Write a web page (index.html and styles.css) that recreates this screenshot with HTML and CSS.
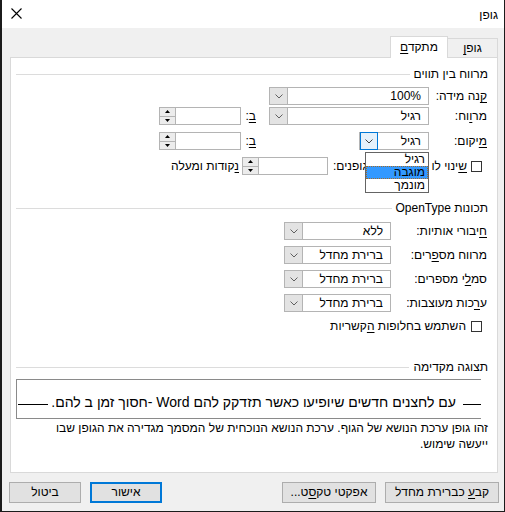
FILE: index.html
```html
<!DOCTYPE html>
<html lang="he" dir="rtl">
<head>
<meta charset="utf-8">
<title>גופן</title>
<link rel="stylesheet" href="styles.css">
</head>
<body>
<div class="window">
  <div class="titlebar">
    <span class="title">גופן</span>
    <svg class="close" width="11" height="11" viewBox="0 0 11 11"><path d="M0.5 0.5 L10.5 10.5 M10.5 0.5 L0.5 10.5" stroke="#000" stroke-width="1.1" fill="none"/></svg>
  </div>
  <div class="content">
    <div class="tabs">
      <div class="tab">גופ<u>ן</u></div>
      <div class="tab active">מתקד<u>ם</u></div>
    </div>
    <div class="panel">
      <div class="group-title t1"><span>מרווח בין תווים</span><i class="rule"></i></div>

      <div class="row r1">
        <span class="lbl w59"><u>ק</u>נה מידה:</span>
        <div class="slot160">
          <div class="combo w160"><span class="val">100%</span><span class="dd"><svg width="8" height="5" viewBox="0 0 8 5"><path d="M0.5 0.5 L4 4 L7.5 0.5" stroke="#606060" fill="none"/></svg></span></div>
        </div>
      </div>

      <div class="row r2">
        <span class="lbl w59">מר<u>ו</u>וח:</span>
        <div class="slot160">
          <div class="combo w160"><span class="val">רגיל</span><span class="dd"><svg width="8" height="5" viewBox="0 0 8 5"><path d="M0.5 0.5 L4 4 L7.5 0.5" stroke="#606060" fill="none"/></svg></span></div>
        </div>
        <span class="blbl"><u>ב</u>:</span>
        <div class="spin w82"><span class="sval"></span><span class="sbtns"><span class="sb"><svg width="5" height="3" viewBox="0 0 5 3"><path d="M0 3 L2.5 0 L5 3 Z" fill="#000"/></svg></span><span class="sb"><svg width="5" height="3" viewBox="0 0 5 3"><path d="M0 0 L2.5 3 L5 0 Z" fill="#000"/></svg></span></span></div>
      </div>

      <div class="row r3">
        <span class="lbl w59"><u>מ</u>יקום:</span>
        <div class="slot160">
          <div class="combo w70 focus"><span class="val">רגיל</span><span class="dd"><svg width="8" height="5" viewBox="0 0 8 5"><path d="M0.5 0.5 L4 4 L7.5 0.5" stroke="#404040" fill="none"/></svg></span></div>
          <div class="droplist">
            <div class="opt">רגיל</div>
            <div class="opt sel">מוגבה</div>
            <div class="opt">מונמך</div>
          </div>
        </div>
        <span class="blbl"><u>ב</u>:</span>
        <div class="spin w82"><span class="sval"></span><span class="sbtns"><span class="sb"><svg width="5" height="3" viewBox="0 0 5 3"><path d="M0 3 L2.5 0 L5 3 Z" fill="#000"/></svg></span><span class="sb"><svg width="5" height="3" viewBox="0 0 5 3"><path d="M0 0 L2.5 3 L5 0 Z" fill="#000"/></svg></span></span></div>
      </div>

      <div class="row r4">
        <span class="cb"></span>
        <span class="kern"><span><u>ש</u>ינוי לו</span><span>גופנים:</span></span>
        <div class="spin w86"><span class="sval"></span><span class="sbtns"><span class="sb"><svg width="5" height="3" viewBox="0 0 5 3"><path d="M0 3 L2.5 0 L5 3 Z" fill="#000"/></svg></span><span class="sb"><svg width="5" height="3" viewBox="0 0 5 3"><path d="M0 0 L2.5 3 L5 0 Z" fill="#000"/></svg></span></span></div>
        <span class="after"><u>נ</u>קודות ומעלה</span>
      </div>

      <div class="group-title t2"><span>תכונות OpenType</span><i class="rule"></i></div>

      <div class="row ot first">
        <span class="lbl w97"><u>ח</u>יבורי אותיות:</span>
        <div class="combo w107"><span class="val">ללא</span><span class="dd"><svg width="8" height="5" viewBox="0 0 8 5"><path d="M0.5 0.5 L4 4 L7.5 0.5" stroke="#606060" fill="none"/></svg></span></div>
      </div>
      <div class="row ot">
        <span class="lbl w97">מרווח מס<u>פ</u>רים:</span>
        <div class="combo w107"><span class="val">ברירת מחדל</span><span class="dd"><svg width="8" height="5" viewBox="0 0 8 5"><path d="M0.5 0.5 L4 4 L7.5 0.5" stroke="#606060" fill="none"/></svg></span></div>
      </div>
      <div class="row ot">
        <span class="lbl w97">סמ<u>ל</u>י מספרים:</span>
        <div class="combo w107"><span class="val">ברירת מחדל</span><span class="dd"><svg width="8" height="5" viewBox="0 0 8 5"><path d="M0.5 0.5 L4 4 L7.5 0.5" stroke="#606060" fill="none"/></svg></span></div>
      </div>
      <div class="row ot">
        <span class="lbl w97">ע<u>ר</u>כות מעוצבות:</span>
        <div class="combo w107"><span class="val">ברירת מחדל</span><span class="dd"><svg width="8" height="5" viewBox="0 0 8 5"><path d="M0.5 0.5 L4 4 L7.5 0.5" stroke="#606060" fill="none"/></svg></span></div>
      </div>
      <div class="row cbrow">
        <span class="cb"></span>
        <span class="cbtext">השתמש בחלופות <u>ה</u>קשריות</span>
      </div>

      <div class="group-title t3"><span>תצוגה מקדימה</span><i class="rule"></i></div>
      <div class="preview">
        <i class="pline short"></i>
        <span class="ptext">עם לחצנים חדשים שיופיעו כאשר תזדקק להם Word -חסוך זמן ב להם.</span>
        <i class="pline long"></i>
      </div>
      <p class="desc">זהו גופן ערכת הנושא של הגוף. ערכת הנושא הנוכחית של המסמך מגדירה את הגופן שבו<br>ייעשה שימוש.</p>
    </div>

    <div class="buttons">
      <div class="bgroup">
        <button class="btn w114">קב<u>ע</u> כברירת מחדל</button>
        <button class="btn w94">אפקטי טק<u>ס</u>ט...</button>
      </div>
      <div class="bgroup">
        <button class="btn w72 default">אישור</button>
        <button class="btn w72">ביטול</button>
      </div>
    </div>
  </div>
</div>
</body>
</html>
```
FILE: styles.css
```css
* { box-sizing: border-box; }
html, body {
  margin: 0;
  padding: 0;
  width: 505px;
  height: 512px;
  overflow: hidden;
  background: #fff;
}
body {
  font-family: "Liberation Sans", "DejaVu Sans", "Noto Sans", sans-serif;
  font-size: 12px;
  color: #000;
}
u { text-decoration: underline; text-underline-offset: 2px; }

.window {
  width: 505px;
  height: 512px;
  border-left: 2px solid #1b1b1b;
  border-right: 1px solid #1b1b1b;
  border-bottom: 1px solid #1b1b1b;
  display: flex;
  flex-direction: column;
  direction: rtl;
}

.titlebar {
  height: 28px;
  flex: none;
  background: #fff;
  display: flex;
  align-items: center;
  justify-content: space-between;
  padding: 0 6px 0 9px;
}
.title { font-size: 12px; line-height: 16px; margin-top: 2px; }
.close { display: block; margin-top: -1px; }

.content {
  flex: 1;
  background: #f0f0f0;
  display: flex;
  flex-direction: column;
}

.tabs {
  display: flex;
  align-items: flex-end;
  height: 29px;
  padding-top: 8px;
  margin-right: 6px;
}
.tab {
  height: 19px;
  width: 51px;
  border: 1px solid #d9d9d9;
  border-bottom: none;
  background: #f0f0f0;
  text-align: center;
  line-height: 19px;
  font-size: 12px;
}
.tab.active {
  height: 22px;
  width: 58px;
  margin-right: -1px;
  margin-bottom: -1px;
  background: #fff;
  position: relative;
  z-index: 1;
  line-height: 20px;
}

.panel {
  height: 416px;
  margin: 0 6px 0 8px;
  background: #fff;
  border: 1px solid #d9d9d9;
  padding: 8px 9px 0 5px;
  flex: none;
}

.group-title {
  display: flex;
  align-items: center;
  height: 16px;
  line-height: 16px;
}
.group-title span { white-space: nowrap; }
.rule {
  flex: 1;
  height: 1px;
  background: #dcdcdc;
  margin-right: 4px;
  margin-top: 1px;
}
.t2 { margin-top: 25px; }
.t3 { margin-top: 24px; }

.row {
  display: flex;
  align-items: center;
  height: 18px;
}
.r1 { margin-top: 5px; }
.r2 { margin-top: 2px; }
.r3 { margin-top: 7px; }
.r4 { margin-top: 7px; }
.ot { margin-top: 6px; }
.ot.first { margin-top: 6px; }
.cbrow { margin-top: 5px; }

.lbl { flex: none; white-space: nowrap; padding-right: 1px; }
.w59 { width: 59px; }
.w97 { width: 97px; }

.slot160 {
  width: 160px;
  height: 18px;
  flex: none;
  position: relative;
  display: flex;
}

.combo {
  height: 18px;
  flex: none;
  border: 1px solid #b4b4b4;
  background: #fff;
  display: flex;
  align-items: stretch;
}
.w160 { width: 160px; }
.w70 { width: 70px; }
.w107 { width: 107px; }
.combo .val {
  flex: 1;
  line-height: 16px;
  padding-right: 7px;
  white-space: nowrap;
  overflow: hidden;
}
.combo .dd {
  width: 18px;
  flex: none;
  background: #e3e3e3;
  border-right: 1px solid #b4b4b4;
  display: flex;
  align-items: center;
  justify-content: center;
}
.combo.focus .dd {
  background: #e5f1fb;
  border: 1px solid #0078d7;
  margin: -1px -1px -1px 0;
  height: 18px;
}

.droplist {
  position: absolute;
  top: 20px;
  right: 0;
  width: 64px;
  height: 41px;
  border: 1px solid #646464;
  background: #fff;
  z-index: 5;
  padding: 0;
}
.opt {
  height: 13px;
  line-height: 13px;
  font-size: 12px;
  padding-right: 3px;
  white-space: nowrap;
  overflow: hidden;
}
.opt.sel {
  background: #3399ff;
  outline: 1px dotted #a06a2a;
  outline-offset: -1px;
}

.blbl {
  width: 12px;
  margin-right: 13px;
  flex: none;
  white-space: nowrap;
}

.spin {
  height: 18px;
  flex: none;
  border: 1px solid #b4b4b4;
  background: #fff;
  display: flex;
  margin-right: 3px;
}
.w82 { width: 82px; }
.w86 { width: 86px; margin-right: 5px; }
.sval { flex: 1; }
.sbtns {
  width: 16px;
  flex: none;
  display: flex;
  flex-direction: column;
  border-right: 1px solid #b4b4b4;
}
.sb {
  flex: 1;
  background: #ececec;
  display: flex;
  align-items: center;
  justify-content: center;
}
.sb + .sb { border-top: 1px solid #b4b4b4; }
.sb svg { display: block; }

.cb {
  width: 11px;
  height: 11px;
  border: 1px solid #333;
  background: #fff;
  flex: none;
  margin-right: 6px;
}
.kern {
  width: 134px;
  margin-right: 4px;
  display: flex;
  justify-content: space-between;
  white-space: nowrap;
  overflow: hidden;
  flex: none;
}
.after { margin-right: 3px; white-space: nowrap; }
.cbtext { margin-right: 5px; white-space: nowrap; }

.preview {
  margin-top: 4px;
  height: 40px;
  width: 465px;
  border: 1px solid #8a8a8a;
  border-right: none;
  display: flex;
  align-items: center;
  padding-top: 5px;
  margin-right: 7px;
  margin-left: -1px;
}
.pline {
  height: 1px;
  background: #000;
  margin-top: 5px;
}
.pline.short { width: 18px; flex: none; margin-left: 7px; }
.pline.long { flex: 1; margin-right: 3px; margin-left: 1px; }
.ptext {
  font-size: 14px;
  white-space: nowrap;
  line-height: 18px;
}

.desc {
  margin: 1px 0 0 0;
  line-height: 16px;
  font-size: 12px;
  margin-left: -1px;
}

.buttons {
  margin-top: 9px;
  padding: 0 5px 0 7px;
  display: flex;
  justify-content: space-between;
}
.bgroup { display: flex; gap: 9px; }
.btn {
  height: 21px;
  font-family: inherit;
  font-size: 12px;
  color: #000;
  background: #e1e1e1;
  border: 1px solid #adadad;
  padding: 0;
  margin: 0;
  line-height: 17px;
}
.btn.default { border: 2px solid #0078d7; }
.w114 { width: 114px; }
.w94 { width: 94px; }
.w72 { width: 72px; }
```
